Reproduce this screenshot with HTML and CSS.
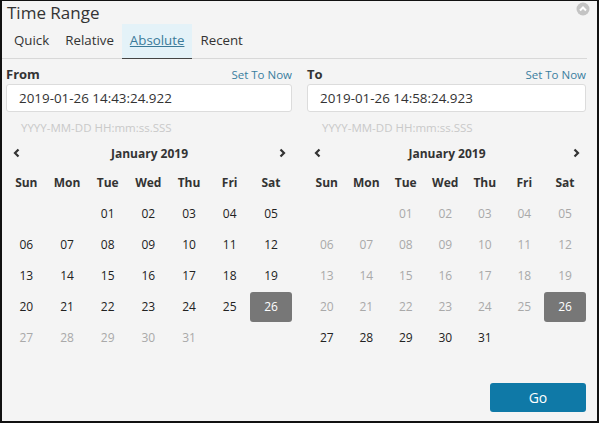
FILE: index.html
```html
<!DOCTYPE html>
<html lang="en">
<head>
    <meta charset="UTF-8">
    <title>Time Range</title>
    <link rel="stylesheet" href="styles.css">
</head>
<body>
    <div class="panel">
        <!-- Collapse button -->
        <span class="collapse">
            <svg width="14" height="14" viewBox="0 0 14 14">
                <circle cx="7" cy="7" r="6.5" fill="#c4c4c4"/>
                <polyline points="4,8.5 7,5.5 10,8.5" fill="none" stroke="#fff" stroke-width="2"/>
            </svg>
        </span>

        <h1 class="title">Time Range</h1>

        <!-- Tabs -->
        <div class="tabs">
            <a class="tab">Quick</a>
            <a class="tab">Relative</a>
            <a class="tab active">Absolute</a>
            <a class="tab">Recent</a>
        </div>

        <div class="columns">
            <div class="column" id="fromCol">
                <div class="label-row">
                    <span class="label">From</span>
                    <a class="set-now">Set To Now</a>
                </div>
                <input class="date-input" type="text" value="2019-01-26 14:43:24.922">
                <div class="hint">YYYY-MM-DD HH:mm:ss.SSS</div>
                <div class="cal-head">
                    <svg class="arrow" width="10" height="10" viewBox="0 0 10 10"><polyline points="6.5,1.5 3,5 6.5,8.5" fill="none" stroke="#333" stroke-width="2.2"/></svg>
                    <span class="month">January 2019</span>
                    <svg class="arrow" width="10" height="10" viewBox="0 0 10 10"><polyline points="3.5,1.5 7,5 3.5,8.5" fill="none" stroke="#333" stroke-width="2.2"/></svg>
                </div>
                <div class="cal-grid" id="fromGrid"></div>
            </div>

            <div class="column" id="toCol">
                <div class="label-row">
                    <span class="label">To</span>
                    <a class="set-now">Set To Now</a>
                </div>
                <input class="date-input" type="text" value="2019-01-26 14:58:24.923">
                <div class="hint">YYYY-MM-DD HH:mm:ss.SSS</div>
                <div class="cal-head">
                    <svg class="arrow" width="10" height="10" viewBox="0 0 10 10"><polyline points="6.5,1.5 3,5 6.5,8.5" fill="none" stroke="#333" stroke-width="2.2"/></svg>
                    <span class="month">January 2019</span>
                    <svg class="arrow" width="10" height="10" viewBox="0 0 10 10"><polyline points="3.5,1.5 7,5 3.5,8.5" fill="none" stroke="#333" stroke-width="2.2"/></svg>
                </div>
                <div class="cal-grid" id="toGrid"></div>
            </div>
        </div>

        <div class="footer">
            <button class="go-btn">Go</button>
        </div>
    </div>

    <script>
        const weekdays = ['Sun', 'Mon', 'Tue', 'Wed', 'Thu', 'Fri', 'Sat'];

        // Janeiro 2019 começa numa terça
        function buildGrid(id, isActive) {
            const grid = document.getElementById(id);
            let html = weekdays.map(d => `<div class="wd">${d}</div>`).join('');
            html += '<div class="day"></div><div class="day"></div>';
            for (let d = 1; d <= 31; d++) {
                const label = d < 10 ? '0' + d : '' + d;
                let cls = 'day';
                if (d === 26) cls += ' selected';
                else if (!isActive(d)) cls += ' muted';
                html += `<div class="${cls}"><span>${label}</span></div>`;
            }
            grid.innerHTML = html;
        }

        buildGrid('fromGrid', d => d <= 26);
        buildGrid('toGrid', d => d >= 26);
    </script>
</body>
</html>
```

FILE: styles.css
```css
* {
    margin: 0;
    padding: 0;
    box-sizing: border-box;
}

body {
    background: #fff;
    font-family: 'Open Sans', 'Liberation Sans', sans-serif;
    color: #333;
}

.panel {
    position: relative;
    width: 599px;
    height: 423px;
    background: #f4f4f4;
    border: 2px solid #111;
    border-top-width: 1px;
}

/* Collapse */
.collapse {
    position: absolute;
    top: -2px;
    right: 7px;
    width: 14px;
    height: 14px;
}

.title {
    font-size: 17px;
    font-weight: normal;
    line-height: 23px;
    padding-left: 5px;
    color: #333;
}

/* Tabs */
.tabs {
    display: flex;
    margin-right: 10px;
    padding-left: 4px;
    border-bottom: 1px solid #d8d8d8;
}

.tab {
    padding: 0 8px;
    font-size: 13.3px;
    line-height: 33px;
    color: #333;
    border-bottom: 1px solid transparent;
}

.tab.active {
    background: #e4f2f8;
    color: #3b7a99;
    text-decoration: underline;
    border-bottom: 1px solid #444;
    margin-bottom: -1px;
}

/* Columns */
.columns {
    display: flex;
    gap: 15px;
    padding: 0 11px 0 4px;
}

.column {
    flex: 1;
}

#toCol {
    flex: 0 0 279px;
}

.label-row {
    display: flex;
    justify-content: space-between;
    align-items: center;
    margin-top: 6px;
    height: 18px;
}

.label {
    font-size: 13px;
    font-weight: bold;
    color: #333;
}

.set-now {
    font-size: 11.5px;
    color: #3a7e9f;
}

.date-input {
    display: block;
    width: 100%;
    height: 28px;
    margin-top: 1px;
    padding-left: 12px;
    border: 1px solid #dcdcdc;
    border-radius: 3px;
    background: #fff;
    font-family: 'Open Sans', 'Liberation Sans', sans-serif;
    font-size: 13.4px;
    color: #333;
}

.hint {
    margin-top: 8px;
    height: 16px;
    line-height: 16px;
    padding-left: 15px;
    font-size: 11.5px;
    color: #c9c9c9;
}

/* Calendar */
.cal-head {
    display: flex;
    justify-content: space-between;
    align-items: center;
    height: 24px;
    margin-top: 5px;
    padding: 0 5px 0 6px;
}

.month {
    font-size: 12px;
    font-weight: bold;
    color: #333;
}

.cal-grid {
    display: grid;
    grid-template-columns: repeat(7, 1fr);
    grid-auto-rows: 31px;
    margin-top: 2px;
}

.wd,
.day {
    display: flex;
    align-items: center;
    justify-content: center;
    font-size: 12px;
}

.wd {
    font-weight: bold;
    color: #333;
}

.day {
    color: #222;
}

.day.muted {
    color: #a9a9a9;
}

.day.selected span {
    display: flex;
    align-items: center;
    justify-content: center;
    width: 42px;
    height: 30px;
    background: #777;
    border-radius: 3px;
    color: #fff;
}

/* Footer */
.footer {
    display: flex;
    justify-content: flex-end;
    padding-right: 11px;
    margin-top: 30px;
}

.go-btn {
    width: 96px;
    height: 29px;
    border: none;
    border-radius: 3px;
    background: #0f79a7;
    color: #fff;
    font-family: 'Open Sans', 'Liberation Sans', sans-serif;
    font-size: 14px;
}
```
